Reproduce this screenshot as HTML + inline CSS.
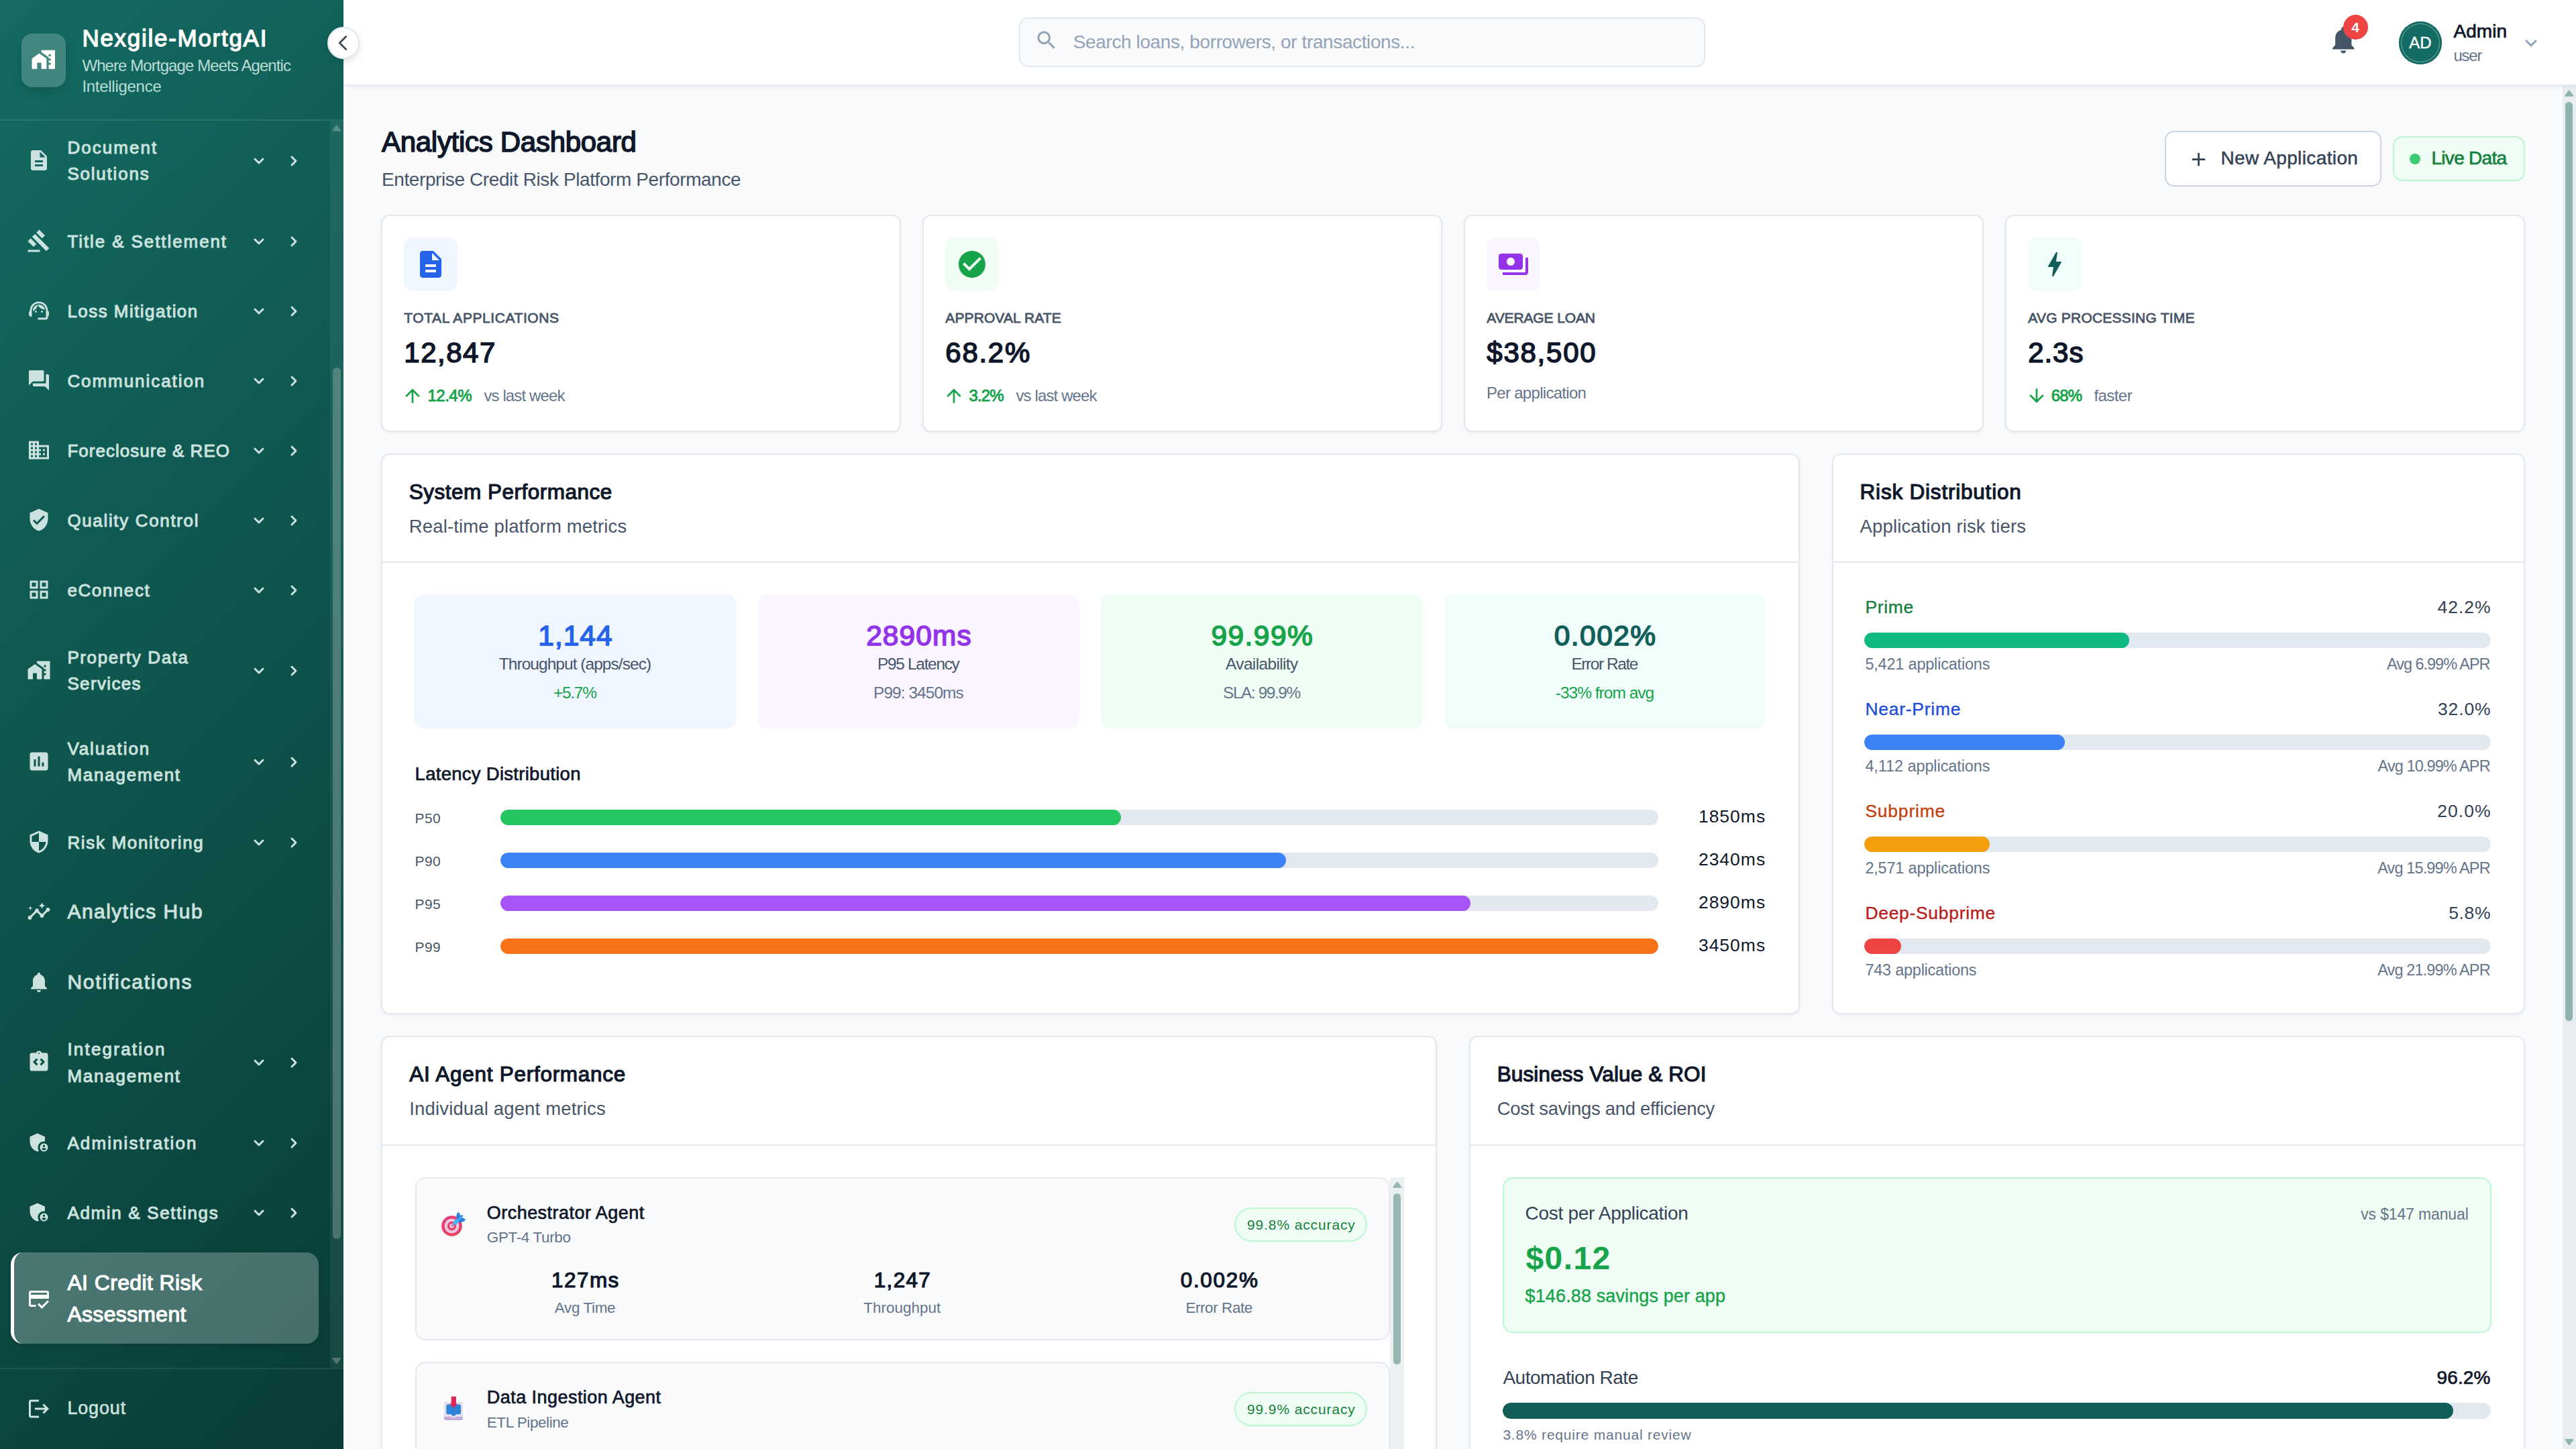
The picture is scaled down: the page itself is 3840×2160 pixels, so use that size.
<!DOCTYPE html>
<html lang="en">
<head>
<meta charset="utf-8">
<title>Nexgile-MortgAI - Analytics Dashboard</title>
<meta name="viewport" content="width=3840">
<style>
*{box-sizing:border-box;margin:0;padding:0}
html,body{width:3840px;height:2160px;overflow:hidden;background:#f8fafc}
body{font-family:"Liberation Sans",sans-serif;position:relative;-webkit-font-smoothing:antialiased}
.b{position:absolute;display:block}
.t{position:absolute;white-space:pre;line-height:1;display:block;font-weight:400;font-family:inherit}
button{font:inherit;cursor:pointer}
.i{position:absolute;display:block;overflow:visible}
.card{background:#fff;border:2px solid #e4e8ee;border-radius:13px;box-shadow:0 2px 4px rgba(15,23,42,.05)}
.hr{background:#e2e8f0}
.track{background:#e2e8f0;border-radius:99px;overflow:hidden}
.fill{border-radius:99px}
</style>
</head>
<body>
 <main class="b" style="left:512px;top:128px;width:3328px;height:2032px;background:#f8fafc;overflow:hidden">
  <h1 class="t" style="left:57px;top:63.15px;font-size:42px;color:#0f172a;letter-spacing:-0.29px;-webkit-text-stroke:1.55px #0f172a;">Analytics Dashboard</h1>
  <span class="t" style="left:57px;top:125.7px;font-size:28px;color:#475569;letter-spacing:-0.4px;">Enterprise Credit Risk Platform Performance</span>
  <button class="b" style="left:2715px;top:67px;width:323px;height:83px;background:#fff;border:2px solid #cbd5e1;border-radius:14px">
   <svg class="i" viewBox="0 0 24 24" width="33" height="33" style="left:31.7px;top:23.5px;fill:#334155;"><path d="M19 13h-6v6h-2v-6H5v-2h6V5h2v6h6v2z"/></svg>
   <span class="t" style="left:81.4px;top:24.7px;font-size:28px;color:#334155;letter-spacing:0.38px;-webkit-text-stroke:0.5px #334155;">New Application</span>
  </button>
  <div class="b" style="left:3055px;top:75px;width:197px;height:67px;background:#f0fdf4;border:2px solid #bbf7d0;border-radius:14px">
   <div class="b" style="left:22.7px;top:23.8px;width:16.4px;height:16.4px;background:#3ccb73;border-radius:50%">
   </div>
   <span class="t" style="left:55.5px;top:16.7px;font-size:28px;color:#15803d;letter-spacing:-0.72px;-webkit-text-stroke:0.7px #15803d;">Live Data</span>
  </div>
  <div class="b card" style="left:56px;top:192px;width:775px;height:324px;">
   <div class="b" style="left:31.5px;top:31.8px;width:80px;height:80px;background:#eff6ff;border-radius:14px">
   </div>
   <svg class="i" viewBox="0 0 24 24" width="48" height="48" style="left:48px;top:48px;fill:#2563eb;"><path d="M14 2H6c-1.1 0-1.99.9-1.99 2L4 20c0 1.1.89 2 1.99 2H18c1.1 0 2-.9 2-2V8l-6-6zm2 16H8v-2h8v2zm0-4H8v-2h8v2zm-3-5V3.5L18.5 9H13z"/></svg>
   <span class="t" style="left:32.3px;top:141.32px;font-size:21px;color:#475569;letter-spacing:0.57px;-webkit-text-stroke:0.78px #475569;">TOTAL APPLICATIONS</span>
   <span class="t" style="left:32.3px;top:183.05px;font-size:42px;color:#0f172a;letter-spacing:1.51px;-webkit-text-stroke:1.55px #0f172a;">12,847</span>
   <svg class="i" viewBox="0 0 24 24" width="32" height="32" style="left:29px;top:251.7px;fill:#16a34a;"><path d="M4 12l1.41 1.41L11 7.83V20h2V7.83l5.58 5.59L20 12l-8-8-8 8z"/></svg>
   <span class="t" style="left:67.4px;top:255.78px;font-size:24px;color:#16a34a;letter-spacing:-0.47px;-webkit-text-stroke:0.89px #16a34a;">12.4%</span>
   <span class="t" style="left:151.4px;top:255.78px;font-size:24px;color:#64748b;letter-spacing:-0.88px;">vs last week</span>
  </div>
  <div class="b card" style="left:863px;top:192px;width:775px;height:324px;">
   <div class="b" style="left:31.5px;top:31.8px;width:80px;height:80px;background:#f0fdf4;border-radius:14px">
   </div>
   <svg class="i" viewBox="0 0 24 24" width="48" height="48" style="left:48px;top:48px;fill:#16a34a;"><path d="M12 2C6.48 2 2 6.48 2 12s4.48 10 10 10 10-4.48 10-10S17.52 2 12 2zm-2 15l-5-5 1.41-1.41L10 14.17l7.59-7.59L19 8l-9 9z"/></svg>
   <span class="t" style="left:32.3px;top:141.32px;font-size:21px;color:#475569;letter-spacing:0.11px;-webkit-text-stroke:0.78px #475569;">APPROVAL RATE</span>
   <span class="t" style="left:32.3px;top:183.05px;font-size:42px;color:#0f172a;letter-spacing:1.73px;-webkit-text-stroke:1.55px #0f172a;">68.2%</span>
   <svg class="i" viewBox="0 0 24 24" width="32" height="32" style="left:29px;top:251.7px;fill:#16a34a;"><path d="M4 12l1.41 1.41L11 7.83V20h2V7.83l5.58 5.59L20 12l-8-8-8 8z"/></svg>
   <span class="t" style="left:67.4px;top:255.78px;font-size:24px;color:#16a34a;letter-spacing:-0.83px;-webkit-text-stroke:0.89px #16a34a;">3.2%</span>
   <span class="t" style="left:137.5px;top:255.78px;font-size:24px;color:#64748b;letter-spacing:-0.88px;">vs last week</span>
  </div>
  <div class="b card" style="left:1670px;top:192px;width:775px;height:324px;">
   <div class="b" style="left:31.5px;top:31.8px;width:80px;height:80px;background:#faf5ff;border-radius:14px">
   </div>
   <svg class="i" viewBox="0 0 24 24" width="48" height="48" style="left:48px;top:48px;fill:#9333ea;"><path d="M19 14V6c0-1.1-.9-2-2-2H3c-1.1 0-2 .9-2 2v8c0 1.1.9 2 2 2h14c1.1 0 2-.9 2-2zm-9-1c-1.66 0-3-1.34-3-3s1.34-3 3-3 3 1.34 3 3-1.34 3-3 3zm13-6v11c0 1.1-.9 2-2 2H4v-2h17V7h2z"/></svg>
   <span class="t" style="left:32.3px;top:141.32px;font-size:21px;color:#475569;letter-spacing:-0.12px;-webkit-text-stroke:0.78px #475569;">AVERAGE LOAN</span>
   <span class="t" style="left:32.3px;top:183.05px;font-size:42px;color:#0f172a;letter-spacing:1.75px;-webkit-text-stroke:1.55px #0f172a;">$38,500</span>
   <span class="t" style="left:32px;top:252.28px;font-size:24px;color:#64748b;letter-spacing:-0.7px;">Per application</span>
  </div>
  <div class="b card" style="left:2477px;top:192px;width:775px;height:324px;">
   <div class="b" style="left:31.5px;top:31.8px;width:80px;height:80px;background:#f0fdfa;border-radius:14px">
   </div>
   <svg class="i" viewBox="0 0 24 24" width="48" height="48" style="left:48px;top:48px;fill:#115e59;"><path d="M11 21h-1l1-7H7.5c-.58 0-.57-.32-.38-.66.19-.34.05-.08.07-.12C8.48 10.94 10.42 7.54 13 3h1l-1 7h3.5c.49 0 .56.33.47.51l-.07.15C12.96 17.55 11 21 11 21z"/></svg>
   <span class="t" style="left:32.3px;top:141.32px;font-size:21px;color:#475569;letter-spacing:0.22px;-webkit-text-stroke:0.78px #475569;">AVG PROCESSING TIME</span>
   <span class="t" style="left:32.3px;top:183.05px;font-size:42px;color:#0f172a;letter-spacing:0.9px;-webkit-text-stroke:1.55px #0f172a;">2.3s</span>
   <svg class="i" viewBox="0 0 24 24" width="32" height="32" style="left:29px;top:251.7px;fill:#16a34a;"><path d="M20 12l-1.41-1.41L13 16.17V4h-2v12.17l-5.58-5.59L4 12l8 8 8-8z"/></svg>
   <span class="t" style="left:66.7px;top:255.78px;font-size:24px;color:#16a34a;letter-spacing:-0.87px;-webkit-text-stroke:0.89px #16a34a;">68%</span>
   <span class="t" style="left:130.4px;top:255.78px;font-size:24px;color:#64748b;letter-spacing:-0.55px;">faster</span>
  </div>
  <section class="b card" style="left:56px;top:548px;width:2114.7px;height:836px;">
   <h2 class="t" style="left:39.8px;top:39.84px;font-size:31.5px;color:#0f172a;letter-spacing:0.49px;-webkit-text-stroke:1.17px #0f172a;">System Performance</h2>
   <span class="t" style="left:39.8px;top:93.22px;font-size:27.5px;color:#475569;letter-spacing:0.14px;">Real-time platform metrics</span>
   <div class="b hr" style="left:0px;top:159px;width:2110.7px;height:2px;">
   </div>
   <div class="b" style="left:47.6px;top:208.2px;width:479.7px;height:200px;background:#eff6ff;border-radius:14px">
    <span class="t" style="left:184.75px;top:40.42px;font-size:42.5px;color:#2563eb;letter-spacing:0.96px;-webkit-text-stroke:1.57px #2563eb;">1,144</span>
    <span class="t" style="left:126.2px;top:91.46px;font-size:24.5px;color:#475569;letter-spacing:-0.96px;">Throughput (apps/sec)</span>
    <span class="t" style="left:207.35px;top:134.66px;font-size:24.5px;color:#16a34a;letter-spacing:-1.29px;">+5.7%</span>
   </div>
   <div class="b" style="left:559.6px;top:208.2px;width:479.7px;height:200px;background:#faf5ff;border-radius:14px">
    <span class="t" style="left:161.55px;top:40.42px;font-size:42.5px;color:#9333ea;letter-spacing:1.08px;-webkit-text-stroke:1.57px #9333ea;">2890ms</span>
    <span class="t" style="left:178.5px;top:91.46px;font-size:24.5px;color:#475569;letter-spacing:-1.35px;">P95 Latency</span>
    <span class="t" style="left:172.45px;top:134.66px;font-size:24.5px;color:#64748b;letter-spacing:-0.96px;">P99: 3450ms</span>
   </div>
   <div class="b" style="left:1071.3px;top:208.2px;width:479.7px;height:200px;background:#f0fdf4;border-radius:14px">
    <span class="t" style="left:164.15px;top:40.42px;font-size:42.5px;color:#16a34a;letter-spacing:1.45px;-webkit-text-stroke:1.57px #16a34a;">99.99%</span>
    <span class="t" style="left:185.75px;top:91.46px;font-size:24.5px;color:#475569;letter-spacing:-0.65px;">Availability</span>
    <span class="t" style="left:181.7px;top:134.66px;font-size:24.5px;color:#64748b;letter-spacing:-1.45px;">SLA: 99.9%</span>
   </div>
   <div class="b" style="left:1582.6px;top:208.2px;width:479.7px;height:200px;background:#f0fdfa;border-radius:14px">
    <span class="t" style="left:164.15px;top:40.42px;font-size:42.5px;color:#115e59;letter-spacing:1.45px;-webkit-text-stroke:1.57px #115e59;">0.002%</span>
    <span class="t" style="left:189.8px;top:91.46px;font-size:24.5px;color:#475569;letter-spacing:-1.44px;">Error Rate</span>
    <span class="t" style="left:166.15px;top:134.66px;font-size:24.5px;color:#16a34a;letter-spacing:-0.99px;">-33% from avg</span>
   </div>
   <h3 class="t" style="left:48.6px;top:461.62px;font-size:27.5px;color:#0f172a;letter-spacing:0.28px;-webkit-text-stroke:0.71px #0f172a;">Latency Distribution</h3>
   <span class="t" style="left:48.6px;top:530.82px;font-size:21px;color:#475569;letter-spacing:0.41px;">P50</span>
   <div class="b track" style="left:176px;top:528.8px;width:1726px;height:23.4px;">
    <div class="b fill" style="left:0px;top:0px;width:925.48px;height:23.4px;background:#22c55e">
    </div>
   </div>
   <span class="t" style="left:1961.9px;top:526.27px;font-size:26.5px;color:#0f172a;letter-spacing:1px;">1850ms</span>
   <span class="t" style="left:48.6px;top:594.72px;font-size:21px;color:#475569;letter-spacing:0.41px;">P90</span>
   <div class="b track" style="left:176px;top:592.7px;width:1726px;height:23.4px;">
    <div class="b fill" style="left:0px;top:0px;width:1170.75px;height:23.4px;background:#3b82f6">
    </div>
   </div>
   <span class="t" style="left:1961.9px;top:590.17px;font-size:26.5px;color:#0f172a;letter-spacing:1px;">2340ms</span>
   <span class="t" style="left:48.6px;top:658.72px;font-size:21px;color:#475569;letter-spacing:0.41px;">P95</span>
   <div class="b track" style="left:176px;top:656.7px;width:1726px;height:23.4px;">
    <div class="b fill" style="left:0px;top:0px;width:1445.87px;height:23.4px;background:#a855f7">
    </div>
   </div>
   <span class="t" style="left:1961.9px;top:654.17px;font-size:26.5px;color:#0f172a;letter-spacing:1px;">2890ms</span>
   <span class="t" style="left:48.6px;top:722.72px;font-size:21px;color:#475569;letter-spacing:0.41px;">P99</span>
   <div class="b track" style="left:176px;top:720.7px;width:1726px;height:23.4px;">
    <div class="b fill" style="left:0px;top:0px;width:1726px;height:23.4px;background:#f97316">
    </div>
   </div>
   <span class="t" style="left:1961.9px;top:718.17px;font-size:26.5px;color:#0f172a;letter-spacing:1px;">3450ms</span>
  </section>
  <section class="b card" style="left:2218.7px;top:548px;width:1033.3px;height:836px;">
   <h2 class="t" style="left:39.9px;top:39.84px;font-size:31.5px;color:#0f172a;letter-spacing:0.79px;-webkit-text-stroke:1.17px #0f172a;">Risk Distribution</h2>
   <span class="t" style="left:39.9px;top:93.22px;font-size:27.5px;color:#475569;letter-spacing:0.14px;">Application risk tiers</span>
   <div class="b hr" style="left:0px;top:159px;width:1029.3px;height:2px;">
   </div>
   <span class="t" style="left:47.7px;top:214.07px;font-size:26.5px;color:#15803d;letter-spacing:0.67px;-webkit-text-stroke:0.37px #15803d;">Prime</span>
   <span class="t" style="left:900.8px;top:214.07px;font-size:26.5px;color:#334155;letter-spacing:0.99px;">42.2%</span>
   <div class="b track" style="left:46.7px;top:264.8px;width:934px;height:23.4px;">
    <div class="b fill" style="left:0px;top:0px;width:394.15px;height:23.4px;background:#10b981">
    </div>
   </div>
   <span class="t" style="left:47.7px;top:300.51px;font-size:23.5px;color:#64748b;letter-spacing:-0.2px;">5,421 applications</span>
   <span class="t" style="left:825.3px;top:300.51px;font-size:23.5px;color:#64748b;letter-spacing:-1.02px;">Avg 6.99% APR</span>
   <span class="t" style="left:47.7px;top:366.17px;font-size:26.5px;color:#1d4ed8;letter-spacing:0.74px;-webkit-text-stroke:0.37px #1d4ed8;">Near-Prime</span>
   <span class="t" style="left:901.2px;top:366.17px;font-size:26.5px;color:#334155;letter-spacing:0.89px;">32.0%</span>
   <div class="b track" style="left:46.7px;top:416.9px;width:934px;height:23.4px;">
    <div class="b fill" style="left:0px;top:0px;width:298.88px;height:23.4px;background:#3b82f6">
    </div>
   </div>
   <span class="t" style="left:47.7px;top:452.61px;font-size:23.5px;color:#64748b;letter-spacing:-0.09px;">4,112 applications</span>
   <span class="t" style="left:811.9px;top:452.61px;font-size:23.5px;color:#64748b;letter-spacing:-0.91px;">Avg 10.99% APR</span>
   <span class="t" style="left:47.7px;top:518.27px;font-size:26.5px;color:#c2410c;letter-spacing:0.78px;-webkit-text-stroke:0.37px #c2410c;">Subprime</span>
   <span class="t" style="left:900.6px;top:518.27px;font-size:26.5px;color:#334155;letter-spacing:1.04px;">20.0%</span>
   <div class="b track" style="left:46.7px;top:569px;width:934px;height:23.4px;">
    <div class="b fill" style="left:0px;top:0px;width:186.8px;height:23.4px;background:#f59e0b">
    </div>
   </div>
   <span class="t" style="left:47.7px;top:604.71px;font-size:23.5px;color:#64748b;letter-spacing:-0.2px;">2,571 applications</span>
   <span class="t" style="left:811.5px;top:604.71px;font-size:23.5px;color:#64748b;letter-spacing:-0.88px;">Avg 15.99% APR</span>
   <span class="t" style="left:47.7px;top:670.37px;font-size:26.5px;color:#b91c1c;letter-spacing:0.69px;-webkit-text-stroke:0.37px #b91c1c;">Deep-Subprime</span>
   <span class="t" style="left:917.5px;top:670.37px;font-size:26.5px;color:#334155;letter-spacing:0.66px;">5.8%</span>
   <div class="b track" style="left:46.7px;top:721.1px;width:934px;height:23.4px;">
    <div class="b fill" style="left:0px;top:0px;width:54.17px;height:23.4px;background:#ef4444">
    </div>
   </div>
   <span class="t" style="left:47.7px;top:756.81px;font-size:23.5px;color:#64748b;letter-spacing:-0.24px;">743 applications</span>
   <span class="t" style="left:811.5px;top:756.81px;font-size:23.5px;color:#64748b;letter-spacing:-0.88px;">Avg 21.99% APR</span>
  </section>
  <section class="b card" style="left:56px;top:1416px;width:1574px;height:700px;">
   <h2 class="t" style="left:40.3px;top:39.84px;font-size:31.5px;color:#0f172a;letter-spacing:0.73px;-webkit-text-stroke:1.17px #0f172a;">AI Agent Performance</h2>
   <span class="t" style="left:40.3px;top:93.22px;font-size:27.5px;color:#475569;letter-spacing:0.15px;">Individual agent metrics</span>
   <div class="b hr" style="left:0px;top:159.5px;width:1570px;height:2px;">
   </div>
   <div class="b" style="left:48.5px;top:208.5px;width:1474.5px;height:500px;">
    <div class="b" style="left:1453.9px;top:0px;width:20.5px;height:500px;background:#ebf1f1">
    </div>
    <div class="b" style="left:1458.5px;top:24.5px;width:11px;height:254.7px;background:#96b7b2;border-radius:6px">
    </div>
    <svg class="i" viewBox="0 0 14 10" width="13.6" height="9.7" style="left:1457.2px;top:6px"><path d="M1.5 10 L12.5 10 Q14.5 10 13.3 8.2 L8.2 1.2 Q7 -0.4 5.8 1.2 L0.7 8.2 Q-0.5 10 1.5 10z" fill="#96b7b2"/></svg>
    <article class="b" style="left:0px;top:0px;width:1453.3px;height:243.5px;background:#f8fafc;border:2px solid #e4e8ee;border-radius:15px">
     <svg class="i" viewBox="0 0 60 60" width="60" height="60" style="left:25.5px;top:38.4px"><defs><linearGradient id="tg" x1="0" y1="0" x2="0" y2="1"><stop offset="0" stop-color="#e83f7c"/><stop offset="1" stop-color="#e8415e"/></linearGradient></defs><circle cx="27.5" cy="32.5" r="15.3" fill="url(#tg)"/><circle cx="27.5" cy="32.5" r="10.8" fill="#ecc9e3"/><circle cx="27.5" cy="32.5" r="6.7" fill="url(#tg)"/><circle cx="27.5" cy="32.5" r="3.2" fill="#e6cbe8"/><path d="M27.6 32.4 L31 29" stroke="#857b93" stroke-width="1.6" stroke-linecap="round"/><path d="M34.2 24.6 L34.4 17.5 Q35.6 11.2 38.6 12.6 L40.2 17 L42.6 16 Q44.8 16.6 43.8 19.2 L43 20.6 L46.6 21.6 Q48.6 23.2 46.4 25.2 L39 27.8z" fill="#2c7fe2"/><path d="M33.6 27.4 L42.4 18.4" stroke="#4bb0f2" stroke-width="2.6" stroke-linecap="round"/><ellipse cx="33.6" cy="26.6" rx="5" ry="3.3" transform="rotate(-45 33.6 26.6)" fill="#4db4ef"/></svg>
     <h4 class="t" style="left:105.3px;top:38.14px;font-size:27px;color:#0f172a;letter-spacing:0.46px;-webkit-text-stroke:0.7px #0f172a;">Orchestrator Agent</h4>
     <span class="t" style="left:105.3px;top:77.95px;font-size:22.5px;color:#64748b;letter-spacing:-0.36px;">GPT-4 Turbo</span>
     <div class="b" style="left:1219.9px;top:43.7px;width:198.1px;height:50.4px;background:#f0fdf4;border:2px solid #bbf7d0;border-radius:26px">
      <span class="t" style="left:16.6px;top:12.52px;font-size:21px;color:#15803d;letter-spacing:0.88px;">99.8% accuracy</span>
     </div>
     <span class="t" style="left:201.55px;top:136.34px;font-size:31.5px;color:#0f172a;letter-spacing:1.44px;-webkit-text-stroke:1.17px #0f172a;">127ms</span>
     <span class="t" style="left:206.35px;top:182.15px;font-size:22.5px;color:#64748b;letter-spacing:-0.38px;">Avg Time</span>
     <span class="t" style="left:682.2px;top:136.34px;font-size:31.5px;color:#0f172a;letter-spacing:1.34px;-webkit-text-stroke:1.17px #0f172a;">1,247</span>
     <span class="t" style="left:666.8px;top:182.15px;font-size:22.5px;color:#64748b;letter-spacing:-0.01px;">Throughput</span>
     <span class="t" style="left:1139.15px;top:136.34px;font-size:31.5px;color:#0f172a;letter-spacing:1.73px;-webkit-text-stroke:1.17px #0f172a;">0.002%</span>
     <span class="t" style="left:1146.9px;top:182.15px;font-size:22.5px;color:#64748b;letter-spacing:-0.42px;">Error Rate</span>
    </article>
    <article class="b" style="left:0px;top:275.3px;width:1453.3px;height:243.5px;background:#f8fafc;border:2px solid #e4e8ee;border-radius:15px">
     <svg class="i" viewBox="0 0 60 60" width="60" height="60" style="left:25.5px;top:38.4px"><defs><linearGradient id="ar" x1="0" y1="0" x2="1" y2="0"><stop offset="0" stop-color="#e8213f"/><stop offset="1" stop-color="#d22c72"/></linearGradient></defs><rect x="16.1" y="20.3" width="27.8" height="26.7" rx="2.6" fill="#c3a9dc"/><path d="M18.7 20.3 h22.6 a2.6 2.6 0 0 1 2.6 2.6 v19 h-9.4 q-4.5 3.6 -9 0 h-9.4 v-19 a2.6 2.6 0 0 1 2.6 -2.6z" fill="#e3e0ea"/><path d="M21.6 23.6 h17.1 a2.3 2.3 0 0 1 2.3 2.3 v10.1 a2.3 2.3 0 0 1 -2.3 2.3 h-5.6 v1.3 q-2.9 2.6 -5.8 0 v-1.3 h-5.7 a2.3 2.3 0 0 1 -2.3 -2.3 v-10.1 a2.3 2.3 0 0 1 2.3 -2.3z" fill="#2b84d8"/><path d="M26.7 11.8 h7.3 v10.8 h1.8 L30.4 29 L24 22.6 h2.7z" fill="url(#ar)"/></svg>
     <h4 class="t" style="left:105.3px;top:38.14px;font-size:27px;color:#0f172a;letter-spacing:0.45px;-webkit-text-stroke:0.7px #0f172a;">Data Ingestion Agent</h4>
     <span class="t" style="left:105.3px;top:77.95px;font-size:22.5px;color:#64748b;letter-spacing:-0.43px;">ETL Pipeline</span>
     <div class="b" style="left:1219.9px;top:43.7px;width:198.1px;height:50.4px;background:#f0fdf4;border:2px solid #bbf7d0;border-radius:26px">
      <span class="t" style="left:16.6px;top:12.52px;font-size:21px;color:#15803d;letter-spacing:0.88px;">99.9% accuracy</span>
     </div>
     <span class="t" style="left:213.18px;top:136.34px;font-size:31.5px;color:#0f172a;-webkit-text-stroke:1.17px #0f172a;">89ms</span>
     <span class="t" style="left:206.35px;top:182.15px;font-size:22.5px;color:#64748b;letter-spacing:-0.38px;">Avg Time</span>
     <span class="t" style="left:684.89px;top:136.34px;font-size:31.5px;color:#0f172a;-webkit-text-stroke:1.17px #0f172a;">3,420</span>
     <span class="t" style="left:666.8px;top:182.15px;font-size:22.5px;color:#64748b;letter-spacing:-0.01px;">Throughput</span>
     <span class="t" style="left:1143.48px;top:136.34px;font-size:31.5px;color:#0f172a;-webkit-text-stroke:1.17px #0f172a;">0.001%</span>
     <span class="t" style="left:1146.9px;top:182.15px;font-size:22.5px;color:#64748b;letter-spacing:-0.42px;">Error Rate</span>
    </article>
   </div>
  </section>
  <section class="b card" style="left:1678px;top:1416px;width:1574px;height:700px;">
   <h2 class="t" style="left:39.7px;top:39.84px;font-size:31.5px;color:#0f172a;letter-spacing:0.13px;-webkit-text-stroke:1.17px #0f172a;">Business Value &amp; ROI</h2>
   <span class="t" style="left:39.7px;top:93.22px;font-size:27.5px;color:#475569;letter-spacing:-0.31px;">Cost savings and efficiency</span>
   <div class="b hr" style="left:0px;top:159.5px;width:1570px;height:2px;">
   </div>
   <div class="b" style="left:47.6px;top:208.8px;width:1474.4px;height:232.7px;background:#f0fdf4;border:2px solid #bbf7d0;border-radius:15px">
    <span class="t" style="left:32px;top:38px;font-size:28px;color:#334155;letter-spacing:-0.31px;">Cost per Application</span>
    <span class="t" style="left:1277.6px;top:42.23px;font-size:23px;color:#64748b;letter-spacing:-0.14px;">vs $147 manual</span>
    <span class="t" style="left:32.9px;top:95.57px;font-size:48px;color:#16a34a;font-weight:700;letter-spacing:1.42px;">$0.12</span>
    <span class="t" style="left:32px;top:162.44px;font-size:27px;color:#16a34a;letter-spacing:0.12px;-webkit-text-stroke:0.38px #16a34a;">$146.88 savings per app</span>
   </div>
   <span class="t" style="left:48.4px;top:494.2px;font-size:28px;color:#334155;letter-spacing:-0.48px;">Automation Rate</span>
   <span class="t" style="left:1440.6px;top:494.2px;font-size:28px;color:#0f172a;letter-spacing:0.1px;-webkit-text-stroke:0.73px #0f172a;">96.2%</span>
   <div class="b track" style="left:47.8px;top:545.2px;width:1473.4px;height:23.9px;">
    <div class="b fill" style="left:0px;top:0px;width:1417.6px;height:23.9px;background:#115e59">
    </div>
   </div>
   <span class="t" style="left:48.4px;top:582.32px;font-size:21px;color:#64748b;letter-spacing:0.8px;">3.8% require manual review</span>
  </section>
 </main>
 <div class="b" style="left:3820px;top:128px;width:20px;height:2032px;background:#e8eef0">
  <div class="b" style="left:4px;top:24px;width:11.2px;height:1369.5px;background:#8fb4af;border-radius:6px">
  </div>
  <svg class="i" viewBox="0 0 14 10" width="13.6" height="9.7" style="left:2.6px;top:5.8px"><path d="M1.5 10 L12.5 10 Q14.5 10 13.3 8.2 L8.2 1.2 Q7 -0.4 5.8 1.2 L0.7 8.2 Q-0.5 10 1.5 10z" fill="#8fb4af"/></svg>
  <svg class="i" viewBox="0 0 14 10" width="13.6" height="9.7" style="left:2.8px;top:2017px"><path d="M1.5 0 L12.5 0 Q14.5 0 13.3 1.8 L8.2 8.8 Q7 10.4 5.8 8.8 L0.7 1.8 Q-0.5 0 1.5 0z" fill="#8fb4af"/></svg>
 </div>
 <header class="b" style="left:512px;top:0px;width:3328px;height:128px;background:#fff;border-bottom:2px solid #e2e8f0;box-shadow:0 2px 6px rgba(15,23,42,.05)">
  <div class="b" style="left:1007px;top:26px;width:1023px;height:74px;background:#f8fafc;border:2px solid #e2e8f0;border-radius:14px">
   <svg class="i" viewBox="0 0 24 24" width="36" height="36" style="left:21px;top:14px;fill:#94a3b8;"><path d="M15.5 14h-.79l-.28-.27C15.41 12.59 16 11.11 16 9.5 16 5.91 13.09 3 9.5 3S3 5.91 3 9.5 5.91 16 9.5 16c1.61 0 3.09-.59 4.23-1.57l.27.28v.79l5 4.99L20.49 19l-4.99-5zm-6 0C7.01 14 5 11.99 5 9.5S7.01 5 9.5 5 14 7.01 14 9.5 11.99 14 9.5 14z"/></svg>
   <span class="t" style="left:78.8px;top:20.5px;font-size:28px;color:#94a3b8;letter-spacing:-0.39px;">Search loans, borrowers, or transactions...</span>
  </div>
  <svg class="i" viewBox="0 0 24 24" width="48.5" height="48.5" style="left:2956.95px;top:34.55px;fill:#475569;"><path d="M12 22c1.1 0 2-.9 2-2h-4c0 1.1.89 2 2 2zm6-6v-5c0-3.07-1.64-5.64-4.5-6.32V4c0-.83-.67-1.5-1.5-1.5s-1.5.67-1.5 1.5v.68C7.63 5.36 6 7.92 6 11v5l-2 2v1h16v-1l-2-2z"/></svg>
  <div class="b" style="left:2980.5px;top:21.8px;width:37px;height:37px;background:#ef4444;border-radius:50%">
   <span class="t" style="left:12.66px;top:8.22px;font-size:21px;color:#fff;font-weight:700;">4</span>
  </div>
  <div class="b" style="left:3064px;top:32px;width:64px;height:64px;background:#136c63;border-radius:50%;box-shadow:inset 0 0 0 3px #136c63,inset 0 0 0 4px rgba(255,255,255,.4)">
   <span class="t" style="left:15.33px;top:20.28px;font-size:24px;color:#fff;-webkit-text-stroke:0.4px #fff;">AD</span>
  </div>
  <span class="t" style="left:3145.4px;top:32.5px;font-size:28px;color:#0f172a;letter-spacing:0.06px;-webkit-text-stroke:0.73px #0f172a;">Admin</span>
  <span class="t" style="left:3145.4px;top:71.18px;font-size:24px;color:#64748b;letter-spacing:-1.23px;">user</span>
  <svg class="i" viewBox="0 0 24 24" width="36" height="36" style="left:3242.7px;top:45.6px;fill:#94a3b8;"><path d="M16.59 8.59L12 13.17 7.41 8.59 6 10l6 6 6-6z"/></svg>
 </header>
 <aside class="b" style="left:0px;top:0px;width:512px;height:2160px;background:linear-gradient(135deg,#136b62 0%,#093c36 100%)">
  <div class="b" style="left:32px;top:50px;width:66px;height:80px;background:rgba(255,255,255,.2);border-radius:16px;box-shadow:0 8px 16px rgba(0,0,0,.12)">
  </div>
  <svg class="i" viewBox="0 0 24 24" width="37.5" height="37.5" style="left:46.25px;top:70.25px;fill:#fff;"><path d="M1 11v10h5v-6h4v6h5V11L8 6z M10 3v1.97l7 5V11h2v2h-2v2h2v2h-2v4h6V3H10zm9 6h-2V7h2v2z"/></svg>
  <h1 class="t" style="left:122.4px;top:39.37px;font-size:35px;color:#fff;letter-spacing:1.72px;-webkit-text-stroke:1.29px #fff;">Nexgile-MortgAI</h1>
  <span class="t" style="left:122.4px;top:85.68px;font-size:24px;color:#b9dcd7;letter-spacing:-0.91px;">Where Mortgage Meets Agentic</span>
  <span class="t" style="left:122.4px;top:117.28px;font-size:24px;color:#b9dcd7;letter-spacing:-0.28px;">Intelligence</span>
  <div class="b" style="left:0px;top:178px;width:512px;height:2px;background:rgba(255,255,255,.1)">
  </div>
  <nav class="b" style="left:0px;top:180px;width:512px;height:1859px;">
   <svg class="i" viewBox="0 0 24 24" width="36" height="36" style="left:40px;top:41px;fill:#cbe2de;"><path d="M14 2H6c-1.1 0-1.99.9-1.99 2L4 20c0 1.1.89 2 1.99 2H18c1.1 0 2-.9 2-2V8l-6-6zm2 16H8v-2h8v2zm0-4H8v-2h8v2zm-3-5V3.5L18.5 9H13z"/></svg>
   <span class="t" style="left:100.4px;top:27.04px;font-size:26px;color:#cbe2de;letter-spacing:2.04px;-webkit-text-stroke:1px #cbe2de;">Document</span>
   <span class="t" style="left:100.4px;top:66.34px;font-size:26px;color:#cbe2de;letter-spacing:1.79px;-webkit-text-stroke:1px #cbe2de;">Solutions</span>
   <svg class="i" viewBox="0 0 24 24" width="24" height="24" style="left:374.3px;top:47.8px;fill:none;stroke:#cbe2de;stroke-width:3;stroke-linecap:round;stroke-linejoin:round;"><path d="m6 9 6 6 6-6"/></svg>
   <svg class="i" viewBox="0 0 24 24" width="24" height="24" style="left:426px;top:47.8px;fill:none;stroke:#cbe2de;stroke-width:3;stroke-linecap:round;stroke-linejoin:round;"><path d="m9 18 6-6-6-6"/></svg>
   <svg class="i" viewBox="0 0 24 24" width="36" height="36" style="left:40px;top:161px;fill:#cbe2de;"><path d="M1 21h12v2H1zM5.245 8.07l2.83-2.827 14.14 14.142-2.828 2.828zM12.317 1l5.657 5.656-2.83 2.83-5.654-5.66zM3.825 9.485l5.657 5.657-2.828 2.828-5.657-5.657z"/></svg>
   <span class="t" style="left:100.4px;top:166.69px;font-size:26px;color:#cbe2de;letter-spacing:1.91px;-webkit-text-stroke:1px #cbe2de;">Title &amp; Settlement</span>
   <svg class="i" viewBox="0 0 24 24" width="24" height="24" style="left:374.3px;top:167.8px;fill:none;stroke:#cbe2de;stroke-width:3;stroke-linecap:round;stroke-linejoin:round;"><path d="m6 9 6 6 6-6"/></svg>
   <svg class="i" viewBox="0 0 24 24" width="24" height="24" style="left:426px;top:167.8px;fill:none;stroke:#cbe2de;stroke-width:3;stroke-linecap:round;stroke-linejoin:round;"><path d="m9 18 6-6-6-6"/></svg>
   <svg class="i" viewBox="0 0 24 24" width="36" height="36" style="left:40px;top:265px;fill:#cbe2de;"><path d="M21 12.22C21 6.73 16.74 3 12 3c-4.69 0-9 3.65-9 9.28-.6.34-1 .98-1 1.72v2c0 1.1.9 2 2 2h1v-6.1c0-3.87 3.13-7 7-7s7 3.13 7 7V19h-8v2h8c1.1 0 2-.9 2-2v-1.22c.59-.31 1-.92 1-1.64v-2.3c0-.7-.41-1.31-1-1.62zM9 12a1 1 0 1 0 0 2 1 1 0 0 0 0-2zm6 0a1 1 0 1 0 0 2 1 1 0 0 0 0-2zm3-.97C17.52 8.18 15.04 6 12.05 6c-3.03 0-6.29 2.51-6.03 6.45 2.47-1.01 4.33-3.21 4.86-5.89 1.31 2.63 4 4.44 7.12 4.47z"/></svg>
   <span class="t" style="left:100.4px;top:270.69px;font-size:26px;color:#cbe2de;letter-spacing:1.46px;-webkit-text-stroke:1px #cbe2de;">Loss Mitigation</span>
   <svg class="i" viewBox="0 0 24 24" width="24" height="24" style="left:374.3px;top:271.8px;fill:none;stroke:#cbe2de;stroke-width:3;stroke-linecap:round;stroke-linejoin:round;"><path d="m6 9 6 6 6-6"/></svg>
   <svg class="i" viewBox="0 0 24 24" width="24" height="24" style="left:426px;top:271.8px;fill:none;stroke:#cbe2de;stroke-width:3;stroke-linecap:round;stroke-linejoin:round;"><path d="m9 18 6-6-6-6"/></svg>
   <svg class="i" viewBox="0 0 24 24" width="36" height="36" style="left:40px;top:369px;fill:#cbe2de;"><path d="M21 6h-2v9H6v2c0 .55.45 1 1 1h11l4 4V7c0-.55-.45-1-1-1zm-4 6V3c0-.55-.45-1-1-1H3c-.55 0-1 .45-1 1v14l4-4h10c.55 0 1-.45 1-1z"/></svg>
   <span class="t" style="left:100.4px;top:374.69px;font-size:26px;color:#cbe2de;letter-spacing:1.94px;-webkit-text-stroke:1px #cbe2de;">Communication</span>
   <svg class="i" viewBox="0 0 24 24" width="24" height="24" style="left:374.3px;top:375.8px;fill:none;stroke:#cbe2de;stroke-width:3;stroke-linecap:round;stroke-linejoin:round;"><path d="m6 9 6 6 6-6"/></svg>
   <svg class="i" viewBox="0 0 24 24" width="24" height="24" style="left:426px;top:375.8px;fill:none;stroke:#cbe2de;stroke-width:3;stroke-linecap:round;stroke-linejoin:round;"><path d="m9 18 6-6-6-6"/></svg>
   <svg class="i" viewBox="0 0 24 24" width="36" height="36" style="left:40px;top:473px;fill:#cbe2de;"><path d="M12 7V3H2v18h20V7H12zM6 19H4v-2h2v2zm0-4H4v-2h2v2zm0-4H4V9h2v2zm0-4H4V5h2v2zm4 12H8v-2h2v2zm0-4H8v-2h2v2zm0-4H8V9h2v2zm0-4H8V5h2v2zm10 12h-8v-2h2v-2h-2v-2h2v-2h-2V9h8v10zm-2-8h-2v2h2v-2zm0 4h-2v2h2v-2z"/></svg>
   <span class="t" style="left:100.4px;top:478.69px;font-size:26px;color:#cbe2de;letter-spacing:1.01px;-webkit-text-stroke:1px #cbe2de;">Foreclosure &amp; REO</span>
   <svg class="i" viewBox="0 0 24 24" width="24" height="24" style="left:374.3px;top:479.8px;fill:none;stroke:#cbe2de;stroke-width:3;stroke-linecap:round;stroke-linejoin:round;"><path d="m6 9 6 6 6-6"/></svg>
   <svg class="i" viewBox="0 0 24 24" width="24" height="24" style="left:426px;top:479.8px;fill:none;stroke:#cbe2de;stroke-width:3;stroke-linecap:round;stroke-linejoin:round;"><path d="m9 18 6-6-6-6"/></svg>
   <svg class="i" viewBox="0 0 24 24" width="36" height="36" style="left:40px;top:577px;fill:#cbe2de;"><path d="M12 1L3 5v6c0 5.55 3.84 10.74 9 12 5.16-1.26 9-6.45 9-12V5l-9-4zm-2 16l-4-4 1.41-1.41L10 14.17l6.59-6.59L18 9l-8 8z"/></svg>
   <span class="t" style="left:100.4px;top:582.69px;font-size:26px;color:#cbe2de;letter-spacing:1.65px;-webkit-text-stroke:1px #cbe2de;">Quality Control</span>
   <svg class="i" viewBox="0 0 24 24" width="24" height="24" style="left:374.3px;top:583.8px;fill:none;stroke:#cbe2de;stroke-width:3;stroke-linecap:round;stroke-linejoin:round;"><path d="m6 9 6 6 6-6"/></svg>
   <svg class="i" viewBox="0 0 24 24" width="24" height="24" style="left:426px;top:583.8px;fill:none;stroke:#cbe2de;stroke-width:3;stroke-linecap:round;stroke-linejoin:round;"><path d="m9 18 6-6-6-6"/></svg>
   <svg class="i" viewBox="0 0 24 24" width="36" height="36" style="left:40px;top:681px;fill:#cbe2de;"><path d="M3 3v8h8V3H3zm6 6H5V5h4v4zm-6 4v8h8v-8H3zm6 6H5v-4h4v4zm4-16v8h8V3h-8zm6 6h-4V5h4v4zm-6 4v8h8v-8h-8zm6 6h-4v-4h4v4z"/></svg>
   <span class="t" style="left:100.4px;top:686.69px;font-size:26px;color:#cbe2de;letter-spacing:1.57px;-webkit-text-stroke:1px #cbe2de;">eConnect</span>
   <svg class="i" viewBox="0 0 24 24" width="24" height="24" style="left:374.3px;top:687.8px;fill:none;stroke:#cbe2de;stroke-width:3;stroke-linecap:round;stroke-linejoin:round;"><path d="m6 9 6 6 6-6"/></svg>
   <svg class="i" viewBox="0 0 24 24" width="24" height="24" style="left:426px;top:687.8px;fill:none;stroke:#cbe2de;stroke-width:3;stroke-linecap:round;stroke-linejoin:round;"><path d="m9 18 6-6-6-6"/></svg>
   <svg class="i" viewBox="0 0 24 24" width="36" height="36" style="left:40px;top:801px;fill:#cbe2de;"><path d="M1 11v10h5v-6h4v6h5V11L8 6z M10 3v1.97l7 5V11h2v2h-2v2h2v2h-2v4h6V3H10zm9 6h-2V7h2v2z"/></svg>
   <span class="t" style="left:100.4px;top:787.04px;font-size:26px;color:#cbe2de;letter-spacing:1.6px;-webkit-text-stroke:1px #cbe2de;">Property Data</span>
   <span class="t" style="left:100.4px;top:826.34px;font-size:26px;color:#cbe2de;letter-spacing:1.36px;-webkit-text-stroke:1px #cbe2de;">Services</span>
   <svg class="i" viewBox="0 0 24 24" width="24" height="24" style="left:374.3px;top:807.8px;fill:none;stroke:#cbe2de;stroke-width:3;stroke-linecap:round;stroke-linejoin:round;"><path d="m6 9 6 6 6-6"/></svg>
   <svg class="i" viewBox="0 0 24 24" width="24" height="24" style="left:426px;top:807.8px;fill:none;stroke:#cbe2de;stroke-width:3;stroke-linecap:round;stroke-linejoin:round;"><path d="m9 18 6-6-6-6"/></svg>
   <svg class="i" viewBox="0 0 24 24" width="36" height="36" style="left:40px;top:937px;fill:#cbe2de;"><path d="M19 3H5c-1.1 0-2 .9-2 2v14c0 1.1.9 2 2 2h14c1.1 0 2-.9 2-2V5c0-1.1-.9-2-2-2zM9 17H7v-7h2v7zm4 0h-2V7h2v10zm4 0h-2v-4h2v4z"/></svg>
   <span class="t" style="left:100.4px;top:923.04px;font-size:26px;color:#cbe2de;letter-spacing:1.93px;-webkit-text-stroke:1px #cbe2de;">Valuation</span>
   <span class="t" style="left:100.4px;top:962.34px;font-size:26px;color:#cbe2de;letter-spacing:1.77px;-webkit-text-stroke:1px #cbe2de;">Management</span>
   <svg class="i" viewBox="0 0 24 24" width="24" height="24" style="left:374.3px;top:943.8px;fill:none;stroke:#cbe2de;stroke-width:3;stroke-linecap:round;stroke-linejoin:round;"><path d="m6 9 6 6 6-6"/></svg>
   <svg class="i" viewBox="0 0 24 24" width="24" height="24" style="left:426px;top:943.8px;fill:none;stroke:#cbe2de;stroke-width:3;stroke-linecap:round;stroke-linejoin:round;"><path d="m9 18 6-6-6-6"/></svg>
   <svg class="i" viewBox="0 0 24 24" width="36" height="36" style="left:40px;top:1057px;fill:#cbe2de;"><path d="M12 1L3 5v6c0 5.55 3.84 10.74 9 12 5.16-1.26 9-6.45 9-12V5l-9-4zm0 10.99h7c-.53 4.12-3.28 7.79-7 8.94V12H5V6.3l7-3.11v8.8z"/></svg>
   <span class="t" style="left:100.4px;top:1062.69px;font-size:26px;color:#cbe2de;letter-spacing:1.66px;-webkit-text-stroke:1px #cbe2de;">Risk Monitoring</span>
   <svg class="i" viewBox="0 0 24 24" width="24" height="24" style="left:374.3px;top:1063.8px;fill:none;stroke:#cbe2de;stroke-width:3;stroke-linecap:round;stroke-linejoin:round;"><path d="m6 9 6 6 6-6"/></svg>
   <svg class="i" viewBox="0 0 24 24" width="24" height="24" style="left:426px;top:1063.8px;fill:none;stroke:#cbe2de;stroke-width:3;stroke-linecap:round;stroke-linejoin:round;"><path d="m9 18 6-6-6-6"/></svg>
   <svg class="i" viewBox="0 0 24 24" width="36" height="36" style="left:40px;top:1161.3px;fill:#cbe2de;"><path d="M21 8c-1.45 0-2.26 1.44-1.93 2.51l-3.55 3.56c-.3-.09-.74-.09-1.04 0l-2.55-2.55C12.27 10.45 11.46 9 10 9c-1.45 0-2.27 1.44-1.93 2.52l-4.56 4.55C2.44 15.74 1 16.55 1 18c0 1.1.9 2 2 2 1.45 0 2.26-1.44 1.93-2.51l4.55-4.56c.3.09.74.09 1.04 0l2.55 2.55C12.73 16.55 13.54 18 15 18c1.45 0 2.27-1.44 1.93-2.52l3.56-3.55c1.07.33 2.51-.48 2.51-1.93 0-1.1-.9-2-2-2z M15 9l.94-2.07L18 6l-2.06-.93L15 3l-.92 2.07L12 6l2.08.93z M3.5 11L4 9l2-.5L4 8l-.5-2L3 8l-2 .5L3 9z"/></svg>
   <span class="t" style="left:100.4px;top:1164.4px;font-size:30px;color:#cbe2de;letter-spacing:1.48px;-webkit-text-stroke:1px #cbe2de;">Analytics Hub</span>
   <svg class="i" viewBox="0 0 24 24" width="36" height="36" style="left:40px;top:1265.6px;fill:#cbe2de;"><path d="M12 22c1.1 0 2-.9 2-2h-4c0 1.1.89 2 2 2zm6-6v-5c0-3.07-1.64-5.64-4.5-6.32V4c0-.83-.67-1.5-1.5-1.5s-1.5.67-1.5 1.5v.68C7.63 5.36 6 7.92 6 11v5l-2 2v1h16v-1l-2-2z"/></svg>
   <span class="t" style="left:100.4px;top:1268.7px;font-size:30px;color:#cbe2de;letter-spacing:1.8px;-webkit-text-stroke:1px #cbe2de;">Notifications</span>
   <svg class="i" viewBox="0 0 24 24" width="36" height="36" style="left:40px;top:1385.3px;fill:#cbe2de;"><path d="M19 3h-4.18C14.4 1.84 13.3 1 12 1c-1.3 0-2.4.84-2.82 2H5c-.14 0-.27.01-.4.04-.39.08-.74.28-1.01.55-.18.18-.33.4-.43.64-.1.23-.16.49-.16.77v14c0 .27.06.54.16.78s.25.45.43.64c.27.27.62.47 1.01.55.13.02.26.03.4.03h14c1.1 0 2-.9 2-2V5c0-1.1-.9-2-2-2zm-8 11.17l-1.41 1.42L6 12l3.59-3.59L11 9.83 8.83 12 11 14.170zm1-9.92c-.41 0-.75-.34-.75-.75s.34-.75.75-.75.75.34.75.75-.34.75-.75.75zm2.41 11.34L13 14.17 15.17 12 13 9.83l1.41-1.42L18 12l-3.59 3.59z"/></svg>
   <span class="t" style="left:100.4px;top:1371.34px;font-size:26px;color:#cbe2de;letter-spacing:2.21px;-webkit-text-stroke:1px #cbe2de;">Integration</span>
   <span class="t" style="left:100.4px;top:1410.64px;font-size:26px;color:#cbe2de;letter-spacing:1.77px;-webkit-text-stroke:1px #cbe2de;">Management</span>
   <svg class="i" viewBox="0 0 24 24" width="24" height="24" style="left:374.3px;top:1392.1px;fill:none;stroke:#cbe2de;stroke-width:3;stroke-linecap:round;stroke-linejoin:round;"><path d="m6 9 6 6 6-6"/></svg>
   <svg class="i" viewBox="0 0 24 24" width="24" height="24" style="left:426px;top:1392.1px;fill:none;stroke:#cbe2de;stroke-width:3;stroke-linecap:round;stroke-linejoin:round;"><path d="m9 18 6-6-6-6"/></svg>
   <svg class="i" viewBox="0 0 24 24" width="36" height="36" style="left:40px;top:1505.3px;fill:#cbe2de;"><path d="M17 11c.34 0 .67.04 1 .09V6.27L10.5 3 3 6.27v4.91c0 4.54 3.2 8.79 7.5 9.82.55-.13 1.08-.32 1.6-.55-.69-.98-1.1-2.17-1.1-3.45 0-3.31 2.69-6 6-6z M17 13c-2.21 0-4 1.79-4 4s1.79 4 4 4 4-1.79 4-4-1.79-4-4-4zm0 1.38c.62 0 1.12.51 1.12 1.12s-.51 1.12-1.12 1.12-1.12-.51-1.12-1.12.5-1.12 1.12-1.12zm0 5.37c-.93 0-1.74-.46-2.24-1.17.05-.72 1.51-1.08 2.24-1.08s2.19.36 2.24 1.08c-.5.71-1.31 1.17-2.24 1.17z"/></svg>
   <span class="t" style="left:100.4px;top:1510.99px;font-size:26px;color:#cbe2de;letter-spacing:2.1px;-webkit-text-stroke:1px #cbe2de;">Administration</span>
   <svg class="i" viewBox="0 0 24 24" width="24" height="24" style="left:374.3px;top:1512.1px;fill:none;stroke:#cbe2de;stroke-width:3;stroke-linecap:round;stroke-linejoin:round;"><path d="m6 9 6 6 6-6"/></svg>
   <svg class="i" viewBox="0 0 24 24" width="24" height="24" style="left:426px;top:1512.1px;fill:none;stroke:#cbe2de;stroke-width:3;stroke-linecap:round;stroke-linejoin:round;"><path d="m9 18 6-6-6-6"/></svg>
   <svg class="i" viewBox="0 0 24 24" width="36" height="36" style="left:40px;top:1609.3px;fill:#cbe2de;"><path d="M17 11c.34 0 .67.04 1 .09V6.27L10.5 3 3 6.27v4.91c0 4.54 3.2 8.79 7.5 9.82.55-.13 1.08-.32 1.6-.55-.69-.98-1.1-2.17-1.1-3.45 0-3.31 2.69-6 6-6z M17 13c-2.21 0-4 1.79-4 4s1.79 4 4 4 4-1.79 4-4-1.79-4-4-4zm0 1.38c.62 0 1.12.51 1.12 1.12s-.51 1.12-1.12 1.12-1.12-.51-1.12-1.12.5-1.12 1.12-1.12zm0 5.37c-.93 0-1.74-.46-2.24-1.17.05-.72 1.51-1.08 2.24-1.08s2.19.36 2.24 1.08c-.5.71-1.31 1.17-2.24 1.17z"/></svg>
   <span class="t" style="left:100.4px;top:1614.99px;font-size:26px;color:#cbe2de;letter-spacing:1.66px;-webkit-text-stroke:1px #cbe2de;">Admin &amp; Settings</span>
   <svg class="i" viewBox="0 0 24 24" width="24" height="24" style="left:374.3px;top:1616.1px;fill:none;stroke:#cbe2de;stroke-width:3;stroke-linecap:round;stroke-linejoin:round;"><path d="m6 9 6 6 6-6"/></svg>
   <svg class="i" viewBox="0 0 24 24" width="24" height="24" style="left:426px;top:1616.1px;fill:none;stroke:#cbe2de;stroke-width:3;stroke-linecap:round;stroke-linejoin:round;"><path d="m9 18 6-6-6-6"/></svg>
   <div class="b" style="left:16px;top:1687px;width:459px;height:136px;background:rgba(255,255,255,.25);border-radius:18px;border-left:5px solid #fff;box-shadow:0 4px 10px rgba(0,0,0,.12)">
   </div>
   <svg class="i" viewBox="0 0 24 24" width="36" height="36" style="left:40px;top:1738px;fill:#fff;"><path d="M20 4H4c-1.11 0-1.99.89-1.99 2L2 18c0 1.11.89 2 2 2h5v-2H4v-6h18V6c0-1.11-.89-2-2-2zm0 4H4V6h16v2zm-5.07 11.17l-2.83-2.83-1.41 1.41L14.93 22 22 14.93l-1.41-1.41-5.66 5.65z"/></svg>
   <span class="t" style="left:100.4px;top:1715.51px;font-size:32px;color:#fff;letter-spacing:0.38px;-webkit-text-stroke:1.18px #fff;">AI Credit Risk</span>
   <span class="t" style="left:100.4px;top:1763.21px;font-size:32px;color:#fff;letter-spacing:0.3px;-webkit-text-stroke:1.18px #fff;">Assessment</span>
   <div class="b" style="left:492px;top:0px;width:20px;height:1859px;background:rgba(255,255,255,.06)">
    <div class="b" style="left:4px;top:368px;width:12px;height:1299px;background:rgba(255,255,255,.22);border-radius:6px">
    </div>
    <svg class="i" viewBox="0 0 14 10" width="13.6" height="9.7" style="left:3.2px;top:5.5px"><path d="M1.5 10 L12.5 10 Q14.5 10 13.3 8.2 L8.2 1.2 Q7 -0.4 5.8 1.2 L0.7 8.2 Q-0.5 10 1.5 10z" fill="rgba(255,255,255,.25)"/></svg>
    <svg class="i" viewBox="0 0 14 10" width="13.6" height="9.7" style="left:3.2px;top:1844px"><path d="M1.5 0 L12.5 0 Q14.5 0 13.3 1.8 L8.2 8.8 Q7 10.4 5.8 8.8 L0.7 1.8 Q-0.5 0 1.5 0z" fill="rgba(255,255,255,.25)"/></svg>
   </div>
  </nav>
  <div class="b" style="left:0px;top:2039px;width:512px;height:2px;background:rgba(255,255,255,.08)">
  </div>
  <svg class="i" viewBox="0 0 24 24" width="36" height="36" style="left:40px;top:2082px;fill:#cbe2de;"><path d="M17 7l-1.41 1.41L18.17 11H8v2h10.17l-2.58 2.58L17 17l5-5zM4 5h8V3H4c-1.1 0-2 .9-2 2v14c0 1.1.9 2 2 2h8v-2H4V5z"/></svg>
  <span class="t" style="left:100.4px;top:2086.14px;font-size:27px;color:#cbe2de;letter-spacing:0.84px;-webkit-text-stroke:0.6px #cbe2de;">Logout</span>
 </aside>
 <button class="b" style="left:487.5px;top:40px;width:48px;height:48px;background:#fff;border:2px solid #e2e8f0;border-radius:50%;box-shadow:0 4px 10px rgba(15,23,42,.12)">
  <svg class="i" viewBox="0 0 24 24" width="38" height="38" style="left:2.5px;top:3px;fill:none;stroke:#3f4a5e;stroke-width:1.7;stroke-linecap:round;stroke-linejoin:round;"><path d="m15 18-6-6 6-6"/></svg>
 </button>
</body>
</html>
